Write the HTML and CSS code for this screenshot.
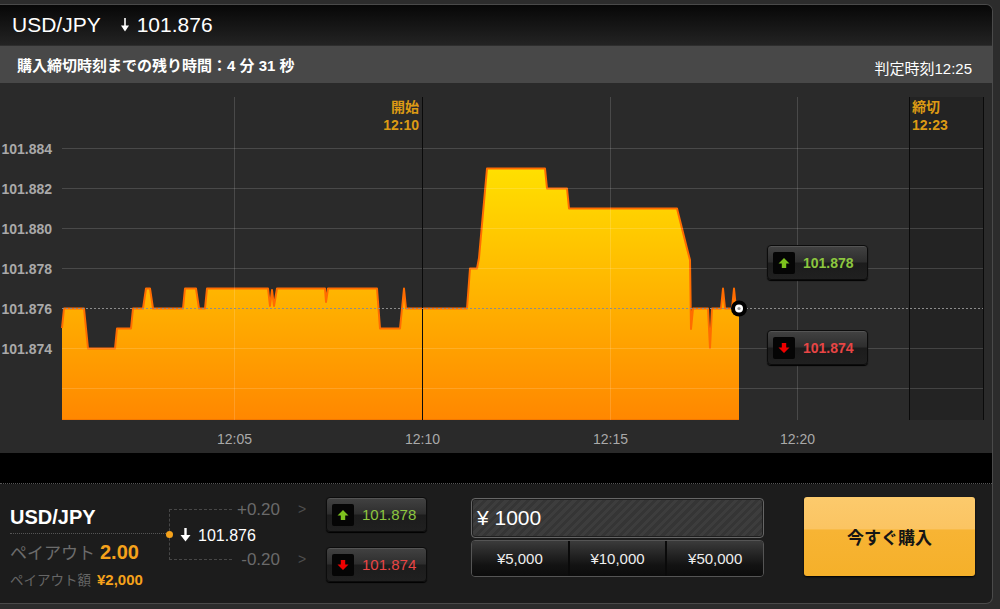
FILE: index.html
```html
<!DOCTYPE html>
<html lang="ja">
  <head>
    <meta charset="UTF-8" />
    <meta name="viewport" content="width=device-width, initial-scale=1.0" />
    <title>USD/JPY</title>
    <link rel="stylesheet" href="styles.css">
  </head>
  <body>
    <div class="panel">
      <div class="head">
        <span class="pair">USD/JPY</span>
        <span class="rate">
          <svg width="10" height="14" viewBox="0 0 10 14"><path d="M5 0V10" stroke="#fff" stroke-width="1.6"/><path d="M1 7.5L5 13.5L9 7.5Z" fill="#fff"/></svg>
          101.876
        </span>
      </div>
      <div class="sub">
        <span class="left">購入締切時刻までの残り時間：4 分 31 秒</span>
        <span class="judge">判定時刻12:25</span>
      </div>

      <div class="chart">
        <svg width="992" height="370" viewBox="0 83 992 370">
          <defs>
            <linearGradient id="fill" gradientUnits="userSpaceOnUse" x1="0" y1="168" x2="0" y2="420">
              <stop offset="0" stop-color="#ffe000" />
              <stop offset="1" stop-color="#ff8700" />
            </linearGradient>
          </defs>
          <rect x="910" y="97" width="73" height="323" fill="#232323" />

          <path fill="url(#fill)" d="M62,420 L62,328 64,308.5 84,308.5 88,348.5 115,348.5 117,328.5 131,328.5 133,308.5 143,308.5 146,288.5 150,288.5 153,308.5 183,308.5 185,288.5 196,288.5 199,308.5 205,308.5 207,288.5 268,288.5 270,306 272,290 274,306 277,288.5 325,288.5 326,302 328,288.5 377,288.5 380,328.5 400,328.5 402,308.5 404,288.5 406,308.5 467,308.5 470,268.5 477,268.5 479,258 487,168.5 545,168.5 547,188.5 567,188.5 569,208.5 677,208.5 682,228.5 687,248.5 690,260 691,329 693,308.5 708,308.5 710,348 712,308.5 721,308.5 723,288.5 725,308.5 732,308.5 734,288.5 736,308.5 739,308.5 L739,420 Z" />
          <polyline class="line" points="62,328 64,308.5 84,308.5 88,348.5 115,348.5 117,328.5 131,328.5 133,308.5 143,308.5 146,288.5 150,288.5 153,308.5 183,308.5 185,288.5 196,288.5 199,308.5 205,308.5 207,288.5 268,288.5 270,306 272,290 274,306 277,288.5 325,288.5 326,302 328,288.5 377,288.5 380,328.5 400,328.5 402,308.5 404,288.5 406,308.5 467,308.5 470,268.5 477,268.5 479,258 487,168.5 545,168.5 547,188.5 567,188.5 569,208.5 677,208.5 682,228.5 687,248.5 690,260 691,329 693,308.5 708,308.5 710,348 712,308.5 721,308.5 723,288.5 725,308.5 732,308.5 734,288.5 736,308.5 739,308.5" />
          <line class="base" x1="62" y1="419.5" x2="739" y2="419.5" />

          <g class="grid">
            <line x1="62" y1="148.5" x2="983" y2="148.5" />
            <line x1="62" y1="188.5" x2="983" y2="188.5" />
            <line x1="62" y1="228.5" x2="983" y2="228.5" />
            <line x1="62" y1="268.5" x2="983" y2="268.5" />
            <line x1="62" y1="348.5" x2="983" y2="348.5" />
            <line x1="62" y1="388.5" x2="983" y2="388.5" />
            <line x1="234.5" y1="97" x2="234.5" y2="420" />
            <line x1="610.5" y1="97" x2="610.5" y2="420" />
            <line x1="797.5" y1="97" x2="797.5" y2="420" />
          </g>
          <g class="edge">
            <line x1="422.5" y1="97" x2="422.5" y2="420" />
            <line x1="909.5" y1="97" x2="909.5" y2="420" />
            <line x1="983.5" y1="97" x2="983.5" y2="420" />
          </g>
          <line class="price" x1="62" y1="308.5" x2="983" y2="308.5" />

          <circle cx="739" cy="308.5" r="8" fill="#000" />
          <circle cx="739" cy="308.5" r="4" fill="#fff" />
          <circle cx="739" cy="308.5" r="1.6" fill="#999" />

          <text class="ylab" x="52" y="153.5">101.884</text>
          <text class="ylab" x="52" y="193.5">101.882</text>
          <text class="ylab" x="52" y="233.5">101.880</text>
          <text class="ylab" x="52" y="273.5">101.878</text>
          <text class="ylab" x="52" y="313.5">101.876</text>
          <text class="ylab" x="52" y="353.5">101.874</text>

          <text class="tlab" x="234.5" y="444">12:05</text>
          <text class="tlab" x="422.5" y="444">12:10</text>
          <text class="tlab" x="610.5" y="444">12:15</text>
          <text class="tlab" x="797.5" y="444">12:20</text>

          <text class="evt end" x="419" y="111.5">開始</text>
          <text class="evt end" x="419" y="130">12:10</text>
          <text class="evt" x="912" y="111.5">締切</text>
          <text class="evt" x="912" y="130">12:23</text>
        </svg>

        <div class="mark up">
          <span class="ico"><svg width="12" height="12" viewBox="0 0 12 12"><path d="M6 1L11.5 6.5H8.2V11H3.8V6.5H0.5Z" fill="#7dc21e"/></svg></span>
          <span class="val">101.878</span>
        </div>
        <div class="mark down">
          <span class="ico"><svg width="12" height="12" viewBox="0 0 12 12"><path d="M6 11L11.5 5.5H8.2V1H3.8V5.5H0.5Z" fill="#ee0000"/></svg></span>
          <span class="val">101.874</span>
        </div>
      </div>
      <div class="gap"></div>

      <div class="trade">
        <div class="info">
          <div class="pair">USD/JPY</div>
          <div class="payout">ペイアウト<b>2.00</b></div>
          <div class="amt">ペイアウト額<b>¥2,000</b></div>
        </div>

        <div class="quote">
          <div class="bracket"></div>
          <span class="diff plus">+0.20</span>
          <span class="chev plus">&gt;</span>
          <div class="now">
            <svg width="11" height="14" viewBox="0 0 11 14"><path d="M5.5 0V9" stroke="#fff" stroke-width="2.4"/><path d="M0.5 7L5.5 13.5L10.5 7Z" fill="#fff"/></svg>
            <span>101.876</span>
          </div>
          <span class="diff minus">-0.20</span>
          <span class="chev minus">&gt;</span>
        </div>

        <div class="bets">
          <div class="bet up">
            <span class="ico"><svg width="12" height="12" viewBox="0 0 12 12"><path d="M6 1L11.5 6.5H8.2V11H3.8V6.5H0.5Z" fill="#7dc21e"/></svg></span>
            <span class="val">101.878</span>
          </div>
          <div class="bet down">
            <span class="ico"><svg width="12" height="12" viewBox="0 0 12 12"><path d="M6 11L11.5 5.5H8.2V1H3.8V5.5H0.5Z" fill="#ee0000"/></svg></span>
            <span class="val">101.874</span>
          </div>
        </div>

        <div class="amount">
          <div class="field">¥ 1000</div>
          <div class="presets">
            <div>¥5,000</div>
            <div>¥10,000</div>
            <div>¥50,000</div>
          </div>
        </div>

        <div class="buy">今すぐ購入</div>
      </div>
    </div>
  </body>
</html>
```

FILE: styles.css
```css
body {
  margin: 0;
  background: #2c2c2c;
  font-family: "Liberation Sans", "Noto Sans CJK JP", sans-serif;
}
.panel {
  width: 992px;
  margin-top: 4px;
  border: 1px solid #4a4a4a;
  border-left: 0;
  border-radius: 0 7px 7px 0;
  overflow: hidden;
  background: #1c1c1c;
}

/* header */
.head {
  height: 40px;
  display: flex;
  align-items: center;
  padding-left: 12px;
  background: linear-gradient(#070707, #232323);
  color: #fff;
  font-size: 21px;
}
.rate {
  display: flex;
  align-items: center;
  margin-left: 19px;
}
.rate svg {
  margin-right: 7px;
}
.sub {
  height: 38px;
  box-sizing: border-box;
  border-top: 1px solid #2e2e2e;
  display: flex;
  justify-content: space-between;
  align-items: center;
  padding: 0 20px 0 17px;
  background: #484848;
  color: #fff;
  font-size: 15px;
}
.sub .left {
  font-weight: bold;
}
.sub .judge {
  padding-top: 5px;
}

/* chart */
.chart {
  position: relative;
  height: 370px;
  background: #2a2a2a;
}
.chart svg {
  display: block;
}
.line {
  fill: none;
  stroke: #ff6c00;
  stroke-width: 2;
  stroke-linejoin: round;
}
.base {
  stroke: #f47800;
  stroke-width: 1;
}
.grid line {
  stroke: rgba(255, 255, 255, 0.15);
  stroke-width: 1;
}
.edge line {
  stroke: #0a0a0a;
  stroke-width: 1;
}
.price {
  stroke: #8c8c8c;
  stroke-width: 1;
  stroke-dasharray: 2 2;
}
.ylab {
  font: bold 14px "Liberation Sans", sans-serif;
  fill: #a9a9a9;
  text-anchor: end;
}
.tlab {
  font: 14px "Liberation Sans", sans-serif;
  fill: #a9a9a9;
  text-anchor: middle;
}
.evt {
  font: bold 14px "Liberation Sans", "Noto Sans CJK JP", sans-serif;
  fill: #dc9a14;
}
.evt.end {
  text-anchor: end;
}
.gap {
  height: 30px;
  background: #000;
  border-bottom: 1px dotted #555;
}

/* price buttons */
.mark,
.bet {
  box-sizing: border-box;
  width: 101px;
  height: 35px;
  display: flex;
  align-items: center;
  padding-left: 5px;
  border: 1px solid #0c0c0c;
  border-radius: 4px;
  background: linear-gradient(#424242, #2e2e2e 48%, #1c1c1c 52%, #202020);
  box-shadow: inset 0 1px 0 rgba(255, 255, 255, 0.1), 0 1px 1px #000;
}
.mark {
  position: absolute;
  left: 767px;
  font-size: 14px;
  font-weight: bold;
}
.mark.up {
  top: 162px;
}
.mark.down {
  top: 247px;
}
.ico {
  width: 22px;
  height: 22px;
  flex: none;
  display: flex;
  align-items: center;
  justify-content: center;
  background: #050505;
  border-radius: 2px;
}
.val {
  margin-left: 8px;
}
.up .val {
  color: #8cc63f;
}
.down .val {
  color: #e84545;
}

/* trade bar */
.trade {
  height: 119px;
  box-sizing: border-box;
  display: flex;
  align-items: flex-start;
  padding: 13px 0 0 10px;
}
.info {
  width: 158px;
  margin-top: 8px;
}
.info .pair {
  font-size: 20px;
  font-weight: bold;
  color: #fff;
  line-height: 24px;
  padding-bottom: 4px;
  border-bottom: 1px dotted #555;
}
.payout {
  margin-top: 5px;
  line-height: 26px;
  font-size: 17px;
  color: #6c6c6c;
}
.payout b {
  margin-left: 5px;
  font-size: 20px;
  color: #f5a21b;
}
.amt {
  margin-top: 3px;
  line-height: 20px;
  font-size: 13.5px;
  color: #666;
}
.amt b {
  margin-left: 6px;
  font-size: 15px;
  color: #f5a21b;
}

.quote {
  margin-left: 1px;
  display: grid;
  grid-template-columns: 63px 48px 40px;
  grid-template-rows: 25px 25px 25px;
  font-size: 17px;
  color: #6a6a6a;
}
.bracket {
  grid-column: 1;
  grid-row: 1 / 4;
  margin: 12px 0;
  border: 1px dashed #474747;
  border-right: 0;
  position: relative;
}
.bracket::before {
  content: "";
  position: absolute;
  left: -4px;
  top: 50%;
  width: 7px;
  height: 7px;
  margin-top: -4px;
  border-radius: 50%;
  background: #f5a21b;
}
.diff {
  grid-column: 2;
  text-align: right;
  line-height: 25px;
}
.chev {
  grid-column: 3;
  padding-left: 18px;
  line-height: 25px;
  font-size: 14px;
  color: #4e4e4e;
}
.plus {
  grid-row: 1;
}
.minus {
  grid-row: 3;
}
.now {
  grid-column: 1 / 4;
  grid-row: 2;
  display: flex;
  align-items: center;
  padding-left: 11px;
  font-size: 16px;
  color: #fff;
}
.now span {
  margin-left: 7px;
  padding-top: 3px;
}

.bets {
  margin-left: 6px;
  display: flex;
  flex-direction: column;
  gap: 15px;
}
.bet {
  font-size: 15px;
}

.amount {
  width: 293px;
  margin: 1px 0 0 44px;
}
.field {
  height: 40px;
  box-sizing: border-box;
  display: flex;
  align-items: center;
  padding-left: 5px;
  border: 1px solid #666;
  border-radius: 4px;
  background: repeating-linear-gradient(135deg, #3d3d3d 0 3px, #353535 3px 6px);
  box-shadow: inset 0 0 0 1px #1e1e1e;
  color: #fff;
  font-size: 21px;
}
.presets {
  height: 35px;
  display: flex;
  margin-top: 2px;
  border: 1px solid #555;
  border-radius: 4px;
  overflow: hidden;
}
.presets div {
  flex: 1;
  display: flex;
  align-items: center;
  justify-content: center;
  border-left: 2px solid #0a0a0a;
  background: linear-gradient(#3b3b3b, #262626 35%, #121212 70%, #0c0c0c);
  color: #eee;
  font-size: 15px;
}
.presets div:first-child {
  border-left: 0;
}

.buy {
  width: 171px;
  height: 79px;
  margin-left: 40px;
  display: flex;
  align-items: center;
  justify-content: center;
  border-radius: 3px;
  background: linear-gradient(#fcca6c, #fbc462 40%, #f7b434 42%, #f5b02a);
  box-shadow: 0 1px 2px #000;
  color: #151515;
  font-size: 17px;
  font-weight: bold;
}
```
